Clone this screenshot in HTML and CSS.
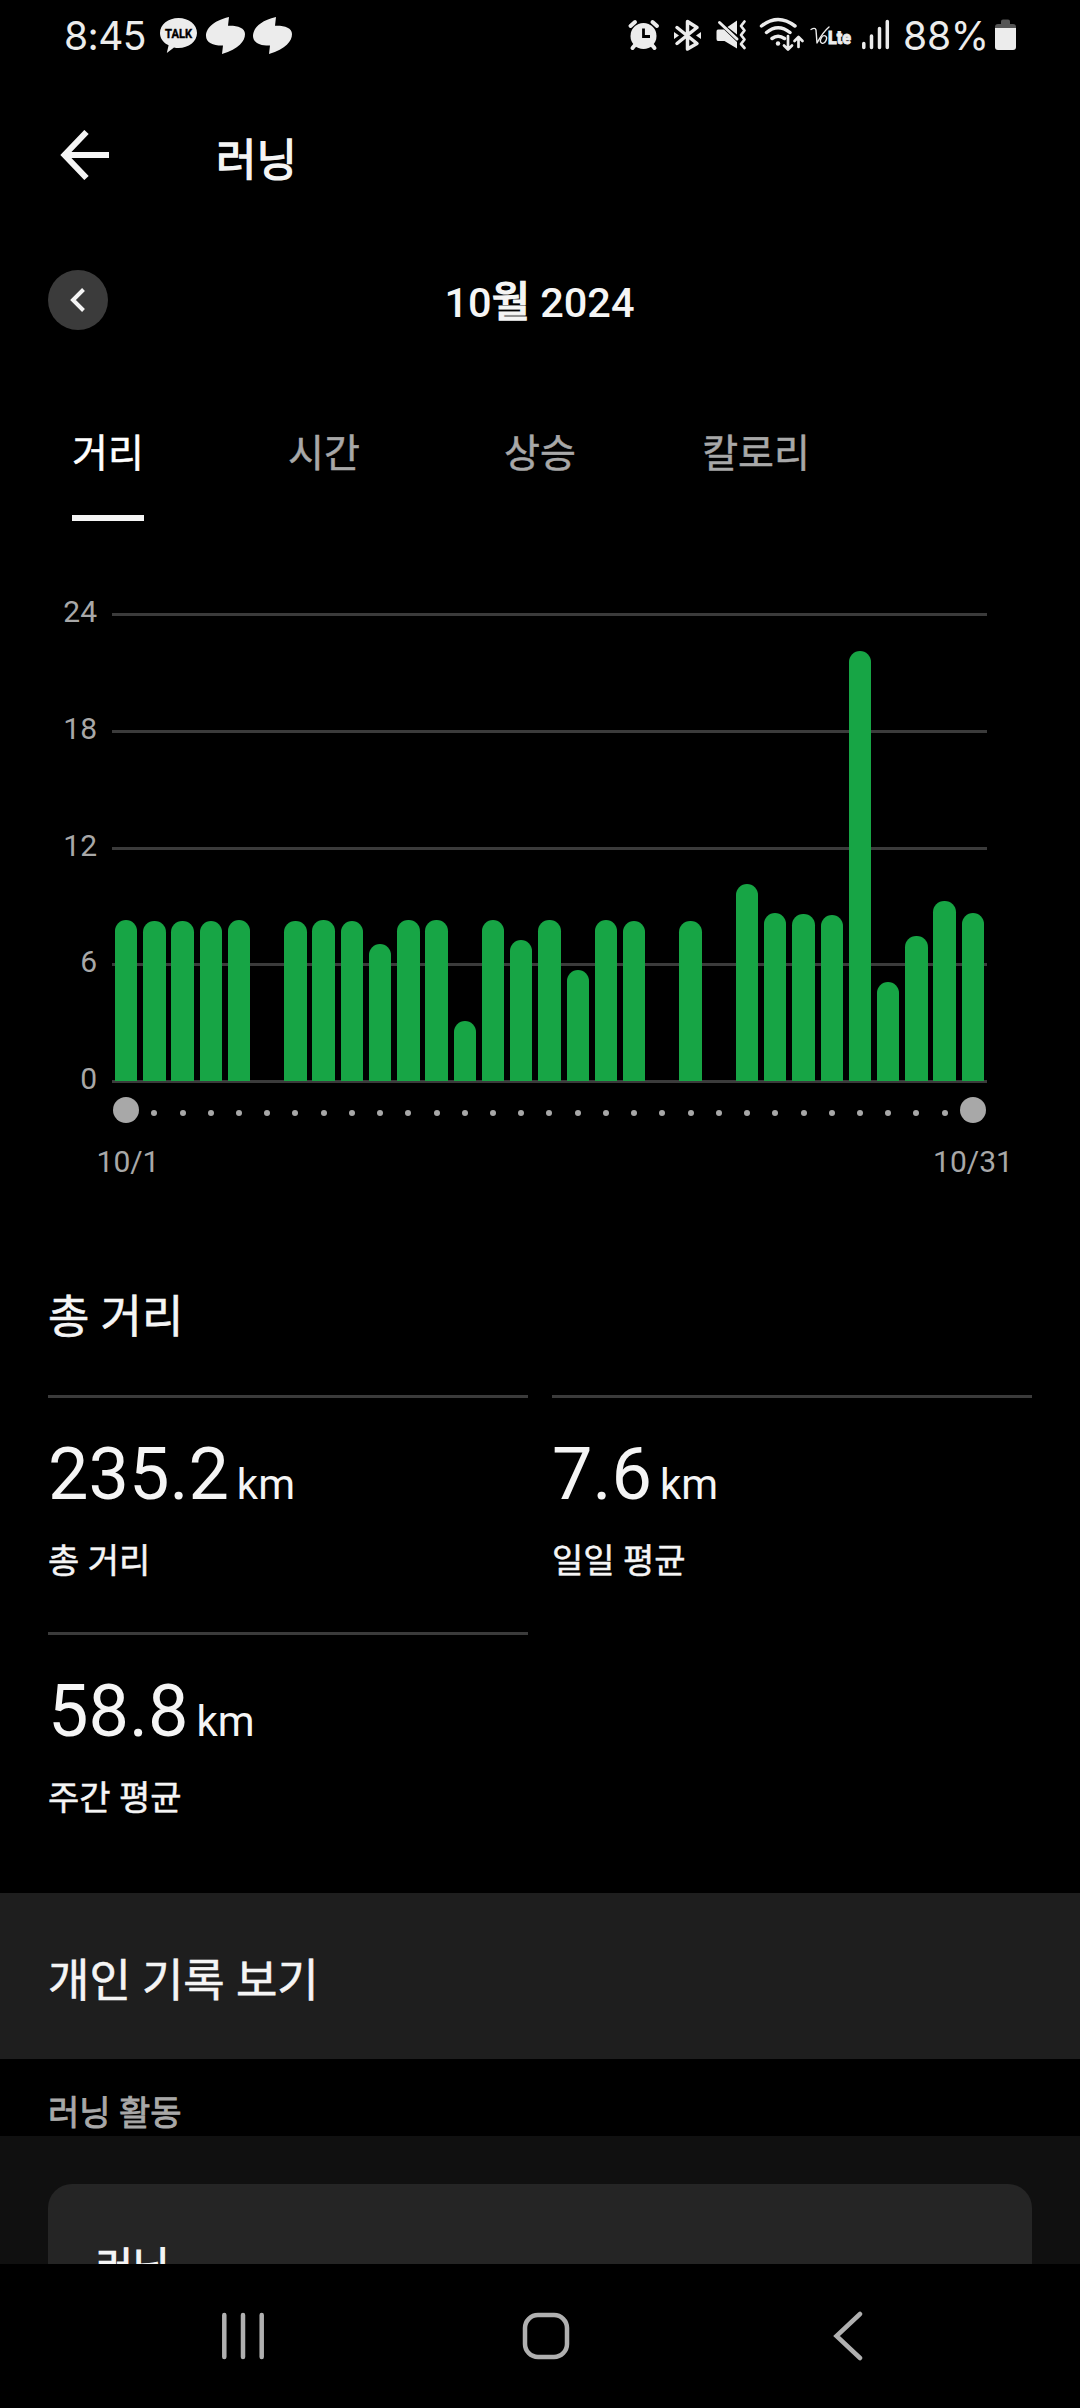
FILE: index.html
```html
<!DOCTYPE html>
<html lang="ko">
<head>
<meta charset="utf-8">
<title>러닝</title>
<link rel="stylesheet" href="styles.css">
</head>
<body>
<div class="screen">
  <div class="status">
    <div class="status-group">
      <span class="clock">8:45</span>
      <svg width="43" height="72" viewBox="160 0 43 72"><path d="M178.500 18C188.700 18 197 24.500 197 33S188.700 48 178.500 48Q176 48 174 47.500L166.800 53 168.600 45.300C163.500 43 160 38.500 160 33C160 24.500 168.300 18 178.500 18Z" fill="#ececec"/><text class="talk" x="178.600" y="38" text-anchor="middle" textLength="27" lengthAdjust="spacingAndGlyphs">TALK</text></svg>
      <svg width="47" height="72" viewBox="203 0 47 72"><path id="leaf" d="M229 17C212 21 206 29 206 36C206 43 214 45.800 223 45.500L222 54C239 49 245 41 245 34C245 27.500 237 25.300 228 25.700Z" fill="#ececec"/></svg>
      <svg width="47" height="72" viewBox="203 0 47 72"><use href="#leaf"/></svg>
    </div>
    <div class="status-group">
      <svg width="38" height="72" viewBox="626 0 38 72"><circle cx="643.500" cy="36" r="13" fill="#ececec"/><path d="M630.500 26l4.500-4M657 26l-4.500-4M635 45l-2.500 3M652 45l2.500 3" class="line w4"/><path d="M643.500 28.500V36.500H650" fill="none" stroke="#000" stroke-width="2.800"/></svg>
      <svg width="42" height="72" viewBox="664 0 42 72"><path d="M677 27.500L697 43.500L687.500 49V21.500L697 27.500L677 43.500" class="line w35"/><path d="M674 32l5 3.500-5 3.500zM701 32l-5 3.500 5 3.500z" fill="#ececec"/></svg>
      <svg width="46" height="72" viewBox="706 0 46 72"><path d="M718 29.500H724L737 42V48.500L724.500 41H718Q716.500 41 716.500 39V31.500Q716.500 29.500 718 29.500ZM727.500 27L737 20.500V34.500Z" fill="#ececec"/><path d="M719.500 22.500L737 39" class="line w3"/><path d="M744.500 21.500l-3.500 4.500 3.500 4.500-3.500 4.500 3.500 4.500-3.500 4.500 3.500 4" class="line w25"/></svg>
      <svg width="54" height="72" viewBox="752 0 54 72"><path d="M761.500 26Q778 13 795 26M766.500 32.500Q778 23 790 32.500M772 38.500Q778 34 784.500 38.500" class="line w35"/><circle cx="778" cy="43.500" r="2.200" fill="#ececec"/><path d="M788 36V49M784 45.500L788 49.500L792 45.500M798.500 47V37.500M794.500 41L798.500 37L802.500 41" class="line w25"/></svg>
      <svg width="50" height="72" viewBox="806 0 50 72"><path d="M811 29.500Q815 27 816 30L817 43Q823 32 829 27" class="line w15"/><ellipse cx="823.500" cy="39.500" rx="2.700" ry="4" transform="rotate(25 823.500 39.500)" class="line w15"/><text class="lte" x="828" y="43.500" textLength="23" lengthAdjust="spacingAndGlyphs">Lte</text></svg>
      <svg width="44" height="72" viewBox="856 0 44 72"><path d="M863.800 43.500V47.500M871.500 36V47.500M879.500 28.500V47.500M887.300 21.500V47.500" class="line w35"/></svg>
      <span class="battery-text">88%</span>
      <svg width="28" height="72" viewBox="992 0 28 72"><path d="M995 28V27Q995 24 998 24H1001V21.500Q1001 19.500 1003 19.500H1008Q1010 19.500 1010 21.500V24H1013Q1016 24 1016 27V28Z" fill="#555"/><path d="M995 28H1016V47Q1016 50 1013 50H998Q995 50 995 47Z" fill="#ececec"/></svg>
    </div>
  </div>

  <header class="header">
    <svg class="back" width="50" height="50" viewBox="0 0 50 50"><path d="M26.500 2L4.500 25L26.500 48M5 25H49" fill="none" stroke="#f5f5f5" stroke-width="6"/></svg>
    <h1 class="title">러닝</h1>
  </header>

  <div class="month">
    <div class="prev"><svg width="60" height="60" viewBox="0 0 60 60"><path d="M35.500 19.500L25 30L35.500 40.500" fill="none" stroke="#f5f5f5" stroke-width="4"/></svg></div>
    <div class="month-name">10<span class="month-unit">월</span> 2024</div>
  </div>

  <nav class="tabs">
    <div class="tab active">거리</div>
    <div class="tab">시간</div>
    <div class="tab">상승</div>
    <div class="tab">칼로리</div>
  </nav>

  <section class="chart">
    <div class="chart-body">
      <div class="axis"><span>24</span><span>18</span><span>12</span><span>6</span><span>0</span></div>
      <div class="plot">
        <div class="lines"><i></i><i></i><i></i><i></i><i></i></div>
        <div class="bars">
          <b style="height:161px"></b><b style="height:160px"></b><b style="height:160px"></b><b style="height:160px"></b><b style="height:161px"></b><b style="height:0"></b><b style="height:160px"></b><b style="height:161px"></b><b style="height:160px"></b><b style="height:137px"></b><b style="height:161px"></b><b style="height:161px"></b><b style="height:60px"></b><b style="height:161px"></b><b style="height:141px"></b><b style="height:161px"></b><b style="height:111px"></b><b style="height:161px"></b><b style="height:160px"></b><b style="height:0"></b><b style="height:160px"></b><b style="height:0"></b><b style="height:197px"></b><b style="height:168px"></b><b style="height:167px"></b><b style="height:166px"></b><b style="height:430px"></b><b style="height:99px"></b><b style="height:145px"></b><b style="height:180px"></b><b style="height:168px"></b>
        </div>
      </div>
    </div>
    <div class="ticks"><i></i><i></i><i></i><i></i><i></i><i></i><i></i><i></i><i></i><i></i><i></i><i></i><i></i><i></i><i></i><i></i><i></i><i></i><i></i><i></i><i></i><i></i><i></i><i></i><i></i><i></i><i></i><i></i><i></i><i></i><i></i></div>
    <div class="range"><span>10/1</span><span>10/31</span></div>
  </section>

  <section class="summary">
    <h2 class="heading">총 거리</h2>
    <div class="stats">
      <div class="stat"><div class="value">235.2<span class="unit">km</span></div><div class="label">총 거리</div></div>
      <div class="stat"><div class="value">7.6<span class="unit">km</span></div><div class="label">일일 평균</div></div>
      <div class="stat"><div class="value">58.8<span class="unit">km</span></div><div class="label">주간 평균</div></div>
    </div>
  </section>

  <div class="records">개인 기록 보기</div>
  <div class="subhead">러닝 활동</div>
  <div class="activities"><div class="card">러닝</div></div>

  <div class="navbar">
    <svg width="50" height="50" viewBox="0 0 50 50"><path d="M6.300 4V46M25 4V46M43.700 4V46" class="nav-line"/></svg>
    <svg width="50" height="50" viewBox="0 0 50 50"><rect x="4" y="4" width="42" height="42" rx="13" class="nav-line"/></svg>
    <svg width="50" height="50" viewBox="0 0 50 50"><path d="M37 3L13.500 25L37 47" class="nav-line"/></svg>
  </div>
</div>
</body>
</html>
```
FILE: styles.css
```css
* { box-sizing: border-box; }
body {
  margin: 0;
  background: #000;
  color: #f5f5f5;
  font-family: Roboto, "Noto Sans CJK KR", sans-serif;
}
.screen {
  width: 1080px;
  height: 2408px;
  display: flex;
  flex-direction: column;
  overflow: hidden;
}
h1, h2 { margin: 0; font-weight: 400; }
svg { display: block; flex: none; }

.status {
  height: 72px;
  flex: none;
  padding: 0 60px 0 64px;
  display: flex;
  justify-content: space-between;
}
.status-group {
  display: flex;
  color: #ececec;
  font-family: Inter, sans-serif;
  font-size: 39px;
  line-height: 71px;
}
.clock { width: 96px; letter-spacing: -0.6px; }
.battery-text { width: 92px; padding-left: 3px; letter-spacing: -0.2px; }
.talk { font: 700 12.5px Roboto, sans-serif; fill: #000; stroke: #000; stroke-width: 0.4px; }
.lte { font: 900 18px Roboto, sans-serif; fill: #ececec; stroke: #ececec; stroke-width: 0.8px; }
.line { fill: none; stroke: #ececec; stroke-linecap: round; stroke-linejoin: round; }
.w15 { stroke-width: 1.4; }
.w25 { stroke-width: 2.7; }
.w3 { stroke-width: 3; }
.w35 { stroke-width: 3.5; }
.w4 { stroke-width: 4; }

.header {
  height: 165px;
  flex: none;
  padding-left: 60px;
  display: flex;
  align-items: center;
  gap: 106px;
}
.title { padding-top: 12px; font-size: 44px; line-height: 60px; -webkit-text-stroke: 1.3px; }

.month {
  height: 125px;
  flex: none;
  padding: 0 49px 0 48px;
  display: grid;
  grid-template-columns: 60px 1fr 60px;
  align-items: center;
}
.prev { border-radius: 50%; background: #3b3b3b; }
.month-name { padding-top: 6px; text-align: center; font-size: 41.5px; line-height: 60px; font-weight: 500; }
.month-unit { -webkit-text-stroke: 1.2px; }

.tabs { height: 159px; flex: none; display: flex; justify-content: flex-start; }
.tab {
  width: 216px;
  padding-top: 62px;
  text-align: center;
  font-size: 39px;
  line-height: 60px;
  color: #a8a8a8;
  -webkit-text-stroke: 0.5px;
}
.tab.active { color: #fff; }
.tab.active::after {
  content: "";
  display: block;
  width: 72px;
  height: 6px;
  margin: 31px auto 0;
  background: #f5f5f5;
}

.chart { padding-top: 92px; color: #a8a8a8; font-size: 30px; line-height: 36px; }
.chart-body { display: grid; grid-template-columns: 112px 875px; height: 470px; }
.axis {
  margin: -19px 0 -14px;
  padding-right: 15px;
  display: flex;
  flex-direction: column;
  justify-content: space-between;
  text-align: right;
}
.plot { display: grid; }
.lines, .bars { grid-area: 1 / 1; }
.lines { display: flex; flex-direction: column; justify-content: space-between; }
.lines i { height: 3px; background: #3b3b3b; }
.bars {
  display: grid;
  grid-template-columns: repeat(31, 1fr);
  align-items: end;
  justify-items: center;
  padding-bottom: 2px;
}
.bars b { width: 22.4px; border-radius: 11.2px 11.2px 0 0; background: #17a545; }
.ticks {
  width: 875px;
  height: 54px;
  margin-left: 112px;
  display: grid;
  grid-template-columns: repeat(31, 1fr);
  align-items: center;
  justify-items: center;
}
.ticks i { width: 6px; height: 6px; margin-top: 6px; border-radius: 50%; background: #a8a8a8; }
.ticks i:first-child, .ticks i:last-child { width: 26px; height: 26px; margin: 0 -6px; }
.range { padding: 7px 47px 0 68px; display: flex; justify-content: space-between; }
.range span { width: 120px; text-align: center; }

.summary { padding: 108px 48px 24px; }
.heading { font-size: 45px; line-height: 60px; -webkit-text-stroke: 0.6px; }
.stats { margin-top: 47px; display: grid; grid-template-columns: 1fr 1fr; grid-auto-rows: 237px; column-gap: 24px; }
.stat { border-top: 3px solid #3b3b3b; padding-top: 35px; }
.value { height: 84px; font-size: 72px; line-height: 84px; }
.unit { margin-left: 8px; font-size: 42px; }
.label { margin-top: 20px; font-size: 34px; line-height: 48px; -webkit-text-stroke: 0.5px; }

.records {
  height: 166px;
  flex: none;
  padding: 59px 48px 0;
  background: #1e1e1e;
  font-size: 45px;
  line-height: 60px;
  -webkit-text-stroke: 0.6px;
}
.subhead {
  height: 77px;
  flex: none;
  padding: 34px 48px 0;
  color: #a8a8a8;
  font-size: 34px;
  line-height: 40px;
  -webkit-text-stroke: 0.9px;
}
.activities { height: 128px; flex: none; padding: 48px 48px 0; background: #101010; overflow: hidden; }
.card {
  height: 180px;
  padding: 54px 48px 0;
  border-radius: 24px;
  background: #252525;
  font-size: 40px;
  line-height: 60px;
  -webkit-text-stroke: 1.2px;
}
.navbar {
  height: 144px;
  flex: none;
  padding: 0 207px 0 218px;
  display: flex;
  align-items: center;
  justify-content: space-between;
}
.nav-line { fill: none; stroke: #b0b0b0; stroke-width: 4.5; stroke-linecap: round; }
```
